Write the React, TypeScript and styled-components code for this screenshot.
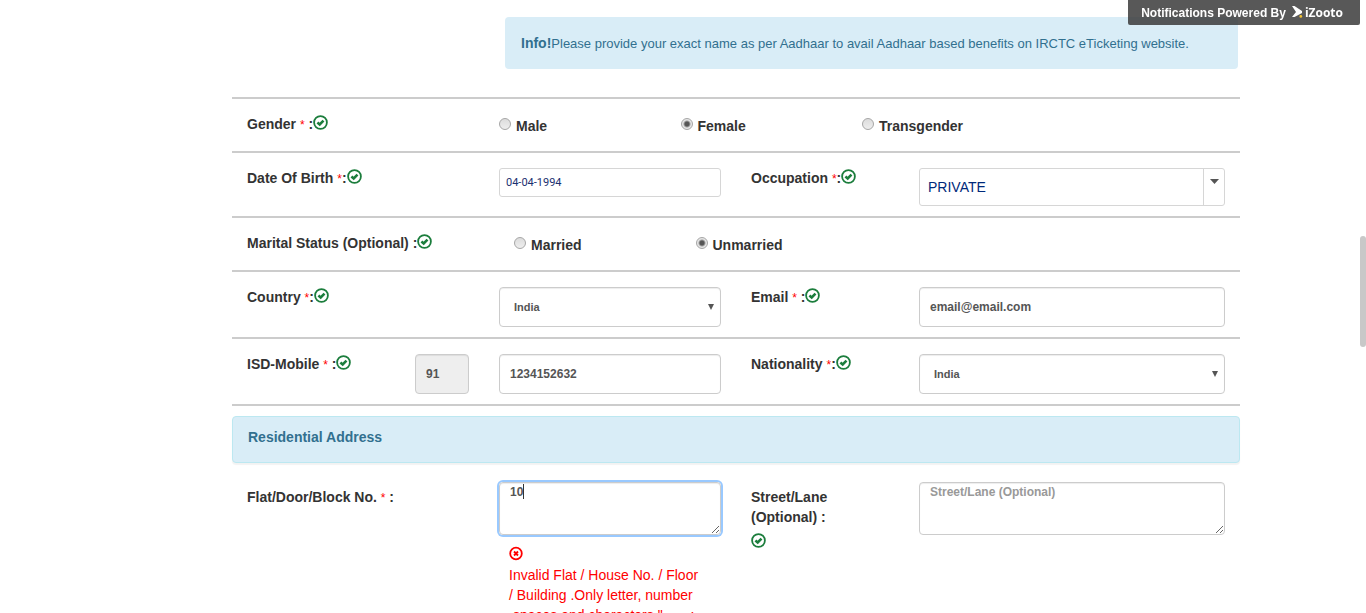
import React from 'react';
import styled, { createGlobalStyle, css } from 'styled-components';

const GlobalStyle = createGlobalStyle`
  *, *::before, *::after { box-sizing: border-box; }
  body {
    margin: 0;
    background: #fff;
    color: #333;
    font: 14px/20px "Liberation Sans", Arial, sans-serif;
  }
`;

const Page = styled.main`
  height: 100vh;
  overflow: hidden;
  padding: 17px 126px 0 232px;
`;

const PoweredBy = styled.aside`
  position: fixed;
  top: 0;
  right: 6px;
  display: flex;
  align-items: center;
  gap: 6px;
  height: 25px;
  padding: 0 17px 0 13px;
  border-radius: 0 0 2px 2px;
  background: rgba(54, 54, 54, 0.83);
  color: #fff;
  font-size: 12px;
  font-weight: bold;
`;

const Brand = styled.a`
  display: flex;
  align-items: center;
  gap: 2px;
  color: #fff;
  font: bold 12px/20px "Open Sans", sans-serif;
  text-decoration: none;
`;

const ScrollThumb = styled.div`
  position: fixed;
  right: 0;
  top: 236px;
  width: 6px;
  height: 111px;
  border-radius: 3px;
  background: #c8c8c8;
`;

const InfoBox = styled.div`
  margin: 0 2px 28px calc(25% + 21px);
  padding: 16px 16px 15px;
  border-radius: 4px;
  background: #d9edf7;
  color: #31708f;
  font-size: 13px;

  strong { font-size: 14px; }
`;

const Rows = styled.div`
  border-bottom: 2px solid #ccc;
`;

const Row = styled.div<{ $plain?: boolean }>`
  display: grid;
  grid-template-columns: 3fr 3fr 2fr 4fr;
  padding: 15px 0 10px;
  border-top: 2px solid #ccc;
  ${(p) => p.$plain && css`
    padding-top: 19px;
    border-top: 0;
  `}
`;

const Cell = styled.div`
  min-width: 0;
  min-height: 27px;
  padding: 0 15px;
`;

const WideCell = styled(Cell)<{ $inset?: boolean }>`
  grid-column: 2 / -1;
  display: grid;
  grid-template-columns: repeat(4, 1fr);
  padding-left: ${(p) => (p.$inset ? 30 : 15)}px;
  padding-right: ${(p) => (p.$inset ? 0 : 15)}px;
`;

const SplitCell = styled.div`
  display: grid;
  grid-template-columns: 2fr 1fr;
`;

const Label = styled.label<{ $low?: boolean }>`
  display: block;
  padding-top: ${(p) => (p.$low ? 5 : 0)}px;
  font-weight: bold;
`;

const Required = styled.span`
  color: #f00;
  font-size: 12px;
  font-weight: normal;
`;

const StatusIcon = styled.svg<{ $block?: boolean }>`
  display: ${(p) => (p.$block ? 'block' : 'inline-block')};
  width: 15px;
  height: 15px;
  margin-top: ${(p) => (p.$block ? 6 : 0)}px;
  vertical-align: -1px;
  fill: none;
`;

const RadioLabel = styled.label`
  display: flex;
  align-items: flex-start;
  gap: 5px;
  padding-top: 2px;
  font-weight: bold;
`;

const Radio = styled.input`
  appearance: none;
  width: 12px;
  height: 12px;
  margin: 2px 0 0;
  border: 1px solid #a6a6a6;
  border-radius: 50%;
  background: linear-gradient(#dcdcdc, #eee);

  &:checked {
    background: radial-gradient(circle, #555 0 2px, #e6e6e6 4px);
  }
`;

const control = css`
  display: block;
  width: 100%;
  margin: 0;
  border: 1px solid #ccc;
  border-radius: 4px;
  background: #fff;
  box-shadow: inset 0 1px 1px rgba(0, 0, 0, 0.075);
  color: #555;
  font: bold 12px/17px "Liberation Sans", Arial, sans-serif;
  outline: none;
`;

const TextInput = styled.input`
  ${control}
  height: 40px;
  padding: 0 10px;

  &:disabled { background: #eee; }
`;

const DateInput = styled.input`
  ${control}
  height: 29px;
  padding: 0 6px;
  border-color: #d6d6d6;
  border-radius: 3px;
  box-shadow: none;
  color: #1b3070;
  font: 11px/17px Roboto, "Liberation Sans", sans-serif;
`;

const SelectBox = styled.div`
  position: relative;
`;

const Select = styled.select<{ $large?: boolean }>`
  ${control}
  appearance: none;
  height: 40px;
  padding: 0 14px;
  font-size: 11px;
  ${(p) => p.$large && css`
    height: 38px;
    padding: 0 8px;
    border-color: #d6d6d6;
    border-radius: 3px;
    box-shadow: none;
    color: #00297a;
    font-size: 14px;
    font-weight: normal;
  `}
`;

const SelectArrow = styled.svg`
  position: absolute;
  top: 17px;
  right: 7px;
  width: 6px;
  height: 6px;
  fill: #555;
  pointer-events: none;
`;

const DropTrigger = styled.span`
  position: absolute;
  top: 1px;
  right: 1px;
  bottom: 1px;
  display: flex;
  justify-content: center;
  width: 21px;
  padding-top: 10px;
  border-left: 1px solid #d6d6d6;
  pointer-events: none;

  svg { width: 9px; height: 5px; fill: #555; }
`;

const SectionTitle = styled.h2`
  margin: 10px 0 0;
  padding: 10px 15px 15px;
  border: 1px solid #bce8f1;
  border-radius: 4px;
  background: #d9edf7;
  box-shadow: 0 2px 1px rgba(0, 0, 0, 0.05);
  color: #31708f;
  font-size: 14px;
  line-height: 20px;
`;

const TextArea = styled.textarea`
  ${control}
  height: 53px;
  padding: 1px 10px;
  resize: vertical;

  &::placeholder { color: #999; opacity: 1; }
`;

const AreaBox = styled.div`
  position: relative;
  border-radius: 4px;
  box-shadow: 0 0 0 2px #99c9ff;
`;

const Caret = styled.span`
  position: absolute;
  top: 2px;
  left: 24px;
  width: 1px;
  height: 15px;
  background: #333;
`;

const ErrorText = styled.p`
  margin: 0;
  padding: 10px 0 0 10px;
  color: #f00;
`;

const CheckIcon = ({ block }: { block?: boolean }) => (
  <StatusIcon $block={block} viewBox="0 0 15 15" aria-hidden="true">
    <circle cx="7.5" cy="7.5" r="6.4" stroke="#1b7d3c" strokeWidth="1.8" />
    <path d="M4.4 7.4 6.7 9.4 10.5 5.6" stroke="#1b7d3c" strokeWidth="2.6" />
  </StatusIcon>
);

const CrossIcon = () => (
  <StatusIcon viewBox="0 0 15 15" aria-hidden="true">
    <circle cx="7" cy="7.5" r="5.8" stroke="#f00" strokeWidth="1.8" />
    <path d="M5 5.5 9 9.5M9 5.5 5 9.5" stroke="#f00" strokeWidth="1.8" />
  </StatusIcon>
);

const CountrySelect = ({ id }: { id: string }) => (
  <SelectBox>
    <Select id={id} defaultValue="India">
      <option>India</option>
    </Select>
    <SelectArrow viewBox="0 0 6 6" aria-hidden="true"><path d="M0 0H6L3 6Z" /></SelectArrow>
  </SelectBox>
);

const Choice = ({ name, text, on }: { name: string; text: string; on?: boolean }) => (
  <RadioLabel>
    <Radio type="radio" name={name} defaultChecked={on} />
    {text}
  </RadioLabel>
);

export default function App() {
  return (
    <>
      <GlobalStyle />
      <Page>
        <InfoBox>
          <strong>Info!</strong>Please provide your exact name as per Aadhaar to avail Aadhaar based benefits on IRCTC eTicketing website.
        </InfoBox>

        <Rows>
          <Row>
            <Cell><Label as="div">Gender <Required>*</Required> :<CheckIcon /></Label></Cell>
            <WideCell role="radiogroup" aria-label="Gender">
              <Choice name="gender" text="Male" />
              <Choice name="gender" text="Female" on />
              <Choice name="gender" text="Transgender" />
            </WideCell>
          </Row>

          <Row>
            <Cell><Label htmlFor="dob">Date Of Birth <Required>*</Required>:<CheckIcon /></Label></Cell>
            <Cell><DateInput id="dob" defaultValue="04-04-1994" /></Cell>
            <Cell><Label htmlFor="occupation">Occupation <Required>*</Required>:<CheckIcon /></Label></Cell>
            <Cell>
              <SelectBox>
                <Select $large id="occupation" defaultValue="PRIVATE">
                  <option>PRIVATE</option>
                </Select>
                <DropTrigger>
                  <svg viewBox="0 0 9 5" aria-hidden="true"><path d="M0 0H9L4.5 5Z" /></svg>
                </DropTrigger>
              </SelectBox>
            </Cell>
          </Row>

          <Row>
            <Cell><Label as="div">Marital Status (Optional) :<CheckIcon /></Label></Cell>
            <WideCell $inset role="radiogroup" aria-label="Marital Status">
              <Choice name="marital" text="Married" />
              <Choice name="marital" text="Unmarried" on />
            </WideCell>
          </Row>

          <Row>
            <Cell><Label htmlFor="country">Country <Required>*</Required>:<CheckIcon /></Label></Cell>
            <Cell><CountrySelect id="country" /></Cell>
            <Cell><Label htmlFor="email">Email <Required>*</Required> :<CheckIcon /></Label></Cell>
            <Cell><TextInput id="email" type="email" defaultValue="email@email.com" /></Cell>
          </Row>

          <Row>
            <SplitCell>
              <Cell><Label htmlFor="mobile">ISD-Mobile <Required>*</Required> :<CheckIcon /></Label></Cell>
              <Cell><TextInput aria-label="ISD code" defaultValue="91" disabled /></Cell>
            </SplitCell>
            <Cell><TextInput id="mobile" type="tel" defaultValue="1234152632" /></Cell>
            <Cell><Label htmlFor="nationality">Nationality <Required>*</Required>:<CheckIcon /></Label></Cell>
            <Cell><CountrySelect id="nationality" /></Cell>
          </Row>
        </Rows>

        <SectionTitle>Residential Address</SectionTitle>

        <Row $plain>
          <Cell><Label $low htmlFor="flat">Flat/Door/Block No. <Required>*</Required> :</Label></Cell>
          <Cell>
            <AreaBox>
              <TextArea id="flat" defaultValue="10" />
              <Caret />
            </AreaBox>
            <ErrorText role="alert">
              <CrossIcon /><br />
              Invalid Flat / House No. / Floor<br />
              / Building .Only letter, number<br />
              ,spaces and characters " , . - :
            </ErrorText>
          </Cell>
          <Cell><Label $low htmlFor="street">Street/Lane (Optional) :<CheckIcon block /></Label></Cell>
          <Cell><TextArea id="street" placeholder="Street/Lane (Optional)" /></Cell>
        </Row>
      </Page>

      <PoweredBy>
        Notifications Powered By
        <Brand href="#">
          <svg width="11" height="13" viewBox="0 0 11 13" aria-hidden="true">
            <path d="M0 0H2.5L10 5V7L2.5 11H0L4 6Z" fill="#fff" />
            <circle cx="8.8" cy="10.4" r="1.4" fill="#f2c230" />
          </svg>
          iZooto
        </Brand>
      </PoweredBy>
      <ScrollThumb />
    </>
  );
}
